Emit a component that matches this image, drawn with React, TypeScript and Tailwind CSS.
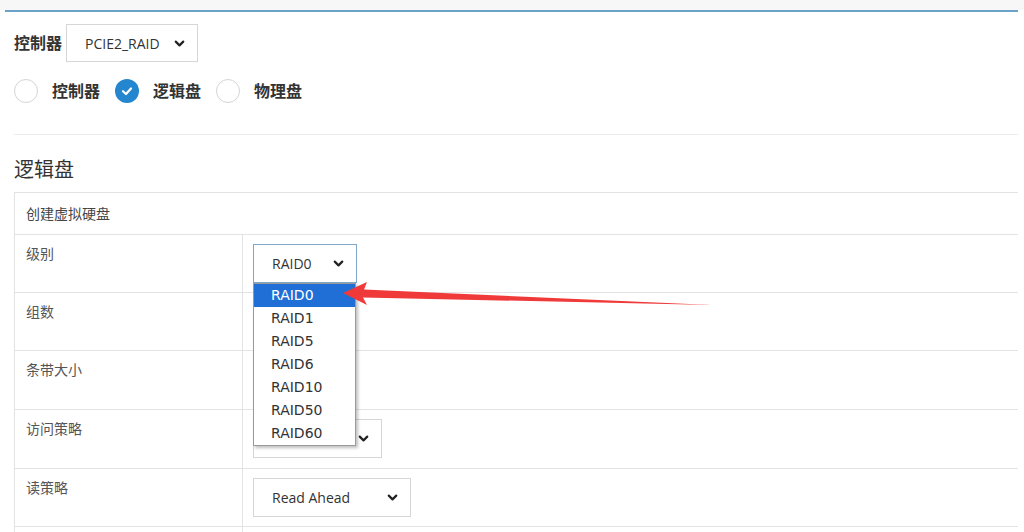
import React from 'react';
import { ChevronDown } from 'lucide-react';

const cjk = { fontFamily: '"Open Sans", "Noto Sans CJK SC", sans-serif' };

const Select: React.FC<{ value: string; width: string; focused?: boolean }> = ({ value, width, focused }) => (
  <div
    className={`${width} h-[39px] flex items-center justify-between pl-[18px] pr-[10px] bg-white border ${
      focused ? 'border-[#7fa7c9]' : 'border-[#d6d6d6]'
    } text-[14px] text-[#333]`}
  >
    <span>{value}</span>
    <ChevronDown size={15} strokeWidth={3.5} className="text-[#222]" />
  </div>
);

const Radio: React.FC<{ label: string; checked?: boolean }> = ({ label, checked }) => (
  <div className="flex items-center">
    {checked ? (
      <div className="w-[24px] h-[24px] rounded-full bg-[#2386cf] flex items-center justify-center">
        <svg width="14" height="14" viewBox="0 0 14 14">
          <path d="M3 7.2 L6 10 L11 4.5" fill="none" stroke="white" strokeWidth="2.2" strokeLinecap="round" strokeLinejoin="round" />
        </svg>
      </div>
    ) : (
      <div className="w-[24px] h-[24px] rounded-full border border-[#d4d4d4] bg-white" />
    )}
    <span className="ml-[14px] mr-[15px] text-[16px] font-semibold text-[#333]">{label}</span>
  </div>
);

const rows = [
  { label: '级别', h: 'h-[58px]' },
  { label: '组数', h: 'h-[58px]' },
  { label: '条带大小', h: 'h-[59px]' },
  { label: '访问策略', h: 'h-[59px]' },
  { label: '读策略', h: 'h-[58px]' },
  { label: '', h: 'h-[40px]' },
];

const options = ['RAID0', 'RAID1', 'RAID5', 'RAID6', 'RAID10', 'RAID50', 'RAID60'];

export default function App() {
  return (
    <div className="w-[1024px] h-[532px] overflow-hidden bg-white relative" style={cjk}>
      <div className="h-[10px] bg-[#f7f7f7]" />
      <div className="ml-[5px] mr-[6px] h-[2px] bg-[#6ba3c7]" />

      <div className="pl-[14px] pr-[6px]">
        {/* controller select */}
        <div className="mt-[12px] flex items-center h-[38px]">
          <span className="text-[16px] font-semibold text-[#333] mr-[4px]">控制器</span>
          <div className="w-[132px] h-[38px] flex items-center justify-between pl-[18px] pr-[10px] border border-[#d6d6d6] text-[14px] text-[#333]">
            <span>PCIE2_RAID</span>
            <ChevronDown size={15} strokeWidth={3.5} className="text-[#222]" />
          </div>
        </div>

        {/* view radios */}
        <div className="mt-[17px] flex items-center h-[24px]">
          <Radio label="控制器" />
          <Radio label="逻辑盘" checked />
          <Radio label="物理盘" />
        </div>

        <div className="mt-[31px] h-px bg-[#ececec]" />

        <h2 className="mt-[21px] h-[28px] leading-[28px] text-[20px] text-[#333]">逻辑盘</h2>

        {/* table */}
        <div className="mt-[8px] border-t border-l border-[#e3e3e3]">
          <div className="h-[42px] flex items-center pl-[11px] border-b border-[#e3e3e3] text-[14px] text-[#444]">
            创建虚拟硬盘
          </div>
          {rows.map((r, i) => (
            <div key={i} className={`${r.h} flex border-b border-[#e3e3e3]`}>
              <div className="w-[228px] border-r border-[#e3e3e3] pl-[11px] pt-[8px] text-[14px] text-[#555]">
                {r.label}
              </div>
              <div className="pl-[10px] pt-[9px]">
                {i === 0 && <Select value="RAID0" width="w-[104px]" focused />}
                {i === 3 && <Select value="" width="w-[129px]" />}
                {i === 4 && <Select value="Read Ahead" width="w-[158px]" />}
              </div>
            </div>
          ))}
        </div>
      </div>

      {/* open dropdown list */}
      <div
        className="absolute left-[253px] top-[283px] w-[103px] h-[163px] bg-white border border-[#9a9a9a] shadow-[2px_2px_3px_rgba(0,0,0,0.25)] text-[14px] text-[#333]"
        style={{ fontFamily: '"DejaVu Sans", "Noto Sans", sans-serif' }}
      >
        {options.map((o, i) => (
          <div
            key={o}
            className={`h-[23px] leading-[23px] pl-[17px] ${i === 0 ? 'bg-[#1f6fd6] text-white' : ''}`}
          >
            {o}
          </div>
        ))}
      </div>

      {/* red annotation arrow */}
      <svg className="absolute left-0 top-0 pointer-events-none" width="1024" height="532">
        <polygon
          points="343,293 367,282 364,289.5 712,305 363,297.5 367,305"
          fill="#f03a3a"
        />
      </svg>
    </div>
  );
}
